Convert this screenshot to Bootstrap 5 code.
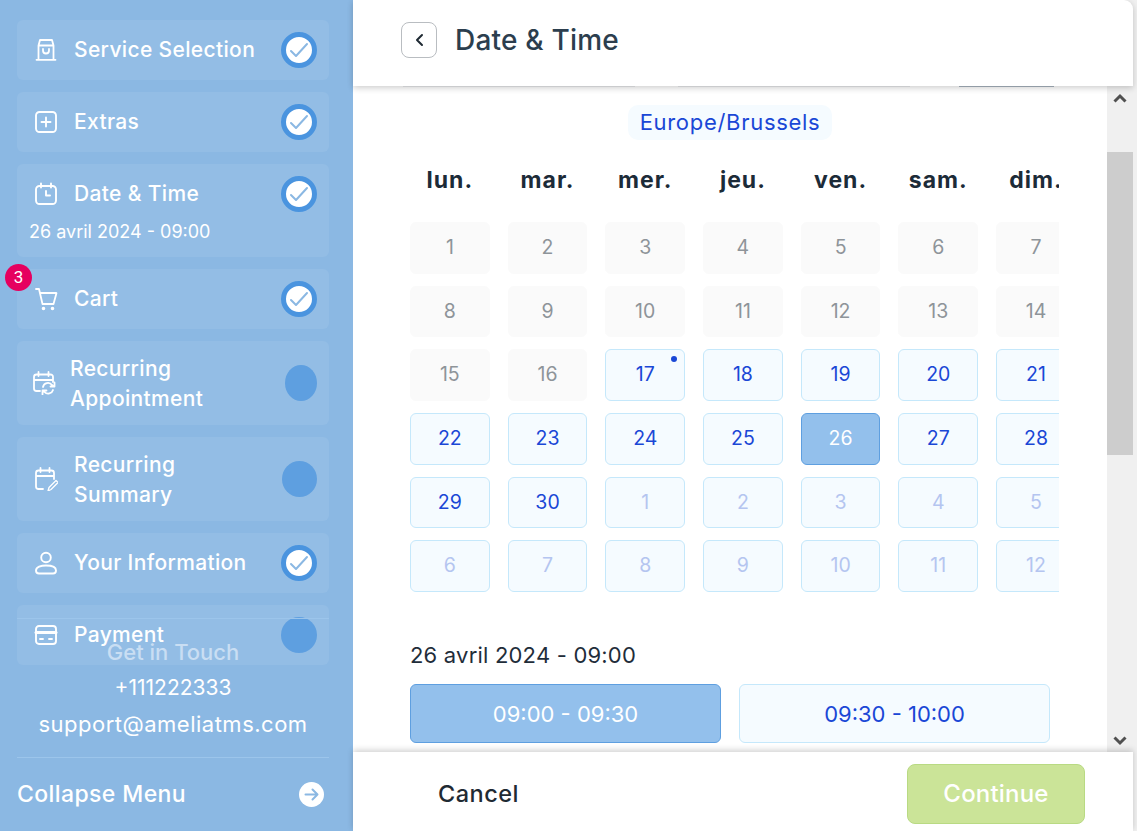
<!DOCTYPE html>
<html lang="fr">
<head>
<meta charset="utf-8">
<title>Date &amp; Time</title>
<link href="https://cdn.jsdelivr.net/npm/bootstrap@5.3.0/dist/css/bootstrap.min.css" rel="stylesheet">
<style>
html,body{height:100%;overflow:hidden}
body{font-family:Inter,"Liberation Sans",sans-serif;background:#fff}
.shell{width:1137px;height:831px}
.side{width:353px;height:831px;background:#8bb8e3;padding:20px 24px 0 17px;color:#fff;flex:none}
.step{background:#93bde5;border-radius:6px;width:312px;min-height:60px;padding:0 12px 0 17px;font-weight:500;font-size:21px;letter-spacing:.35px}
.step-top{min-height:60px}
.step-tall{height:84px}
.step-tall .step-txt{padding-top:2px}
.step-date{height:93px}
.step-sub{font-size:18px;font-weight:400;margin:-5px 0 0 -5px;line-height:26px;letter-spacing:0}
.step-ico{width:24px;height:24px;flex:none;margin-right:16px}
.ico-shift{margin-left:-2px;margin-right:14px}
.step-txt{line-height:30px;flex:1}
.tick{width:36px;height:36px;border-radius:50%;background:#fff;border:5px solid #4a94df;flex:none}
.blob{width:36px;height:36px;border-radius:50%;background:#5e9fe0;flex:none}
.blob-narrow{width:32px}
.blob-mid{width:35px}
.cnt{left:5px;top:264px;width:27px;height:27px;background:#e6005f;font:400 17px/27px Roboto,sans-serif}
.contact{left:17px;top:618px;width:312px;border-top:1px solid #9cc5eb;height:140px;border-bottom:1px solid #9cc5eb;font-size:21px}
.c-title{color:#c9def3;font-weight:500;margin-top:19px;line-height:28px;font-size:22px}
.c-line{line-height:36px}
.c-phone{margin-top:4px}
.c-mail{font-size:22px;letter-spacing:.5px}
.collapse-row{left:17px;top:780px;width:307px;font-weight:500;font-size:23px;letter-spacing:.4px;line-height:28px}
.arrow-dot{width:25px;height:25px;background:#fff;border-radius:50%}
.main{width:784px;height:831px;min-width:0;background:#f0f0f0}
.head{height:86px;width:780px;padding:0 0 6px 48px;box-shadow:0 2px 6px rgba(0,0,0,.2);z-index:2;background:#fff;flex:none;border-top-right-radius:9px}
.back{width:36px;height:36px;border:1px solid #b9bdc1;border-radius:8px;background:#fff;padding:0;margin-right:18px}
.title{font-size:28px;font-weight:500;color:#2c3e4e;margin:0;line-height:36px;letter-spacing:.2px}
.mid{height:666px;min-height:0;flex:none}
.body-pane{width:754px;flex:none;overflow:hidden;padding:0 0 0 57px;background:#fff}
.ghost{height:1px;gap:43px;margin-left:-7px;flex:none}
.ghost i{display:block;height:1px;background:#e9ebed}
.ghost .g1,.ghost .g2{width:232px}
.ghost .g3{width:95px;background:#a9b4c0;margin-left:6px}
.tz-wrap{margin-top:18px;width:640px}
.tz{background:#f5fbff;color:#1a47d6;border-radius:10px;height:35px;line-height:35px;width:204px;text-align:center;font-size:22px;letter-spacing:.7px}
.cal{width:649px;overflow:hidden}
.cal-grid{display:grid;grid-template-columns:repeat(7,79.7px);column-gap:18px;row-gap:12px;width:668px}
.wk{font-weight:700;font-size:23px;letter-spacing:1px;color:#1c2b38;text-align:center;height:82px;line-height:80px;margin-bottom:-12px}
.d{height:51.7px;border-radius:6px;border:1px solid #c5e8fb;background:#f5fbff;color:#1a47d6;text-align:center;font-size:19.5px;line-height:49px}
.d-off{background:#fafafa;border-color:#fafafa;color:#8e9499}
.d-next{color:#b4c5f0}
.d-sel{background:#93c0ec;border-color:#5e9fe0;color:#fff}
.d-dot{top:6px;right:7px;width:6px;height:6px;background:#1a47d6;border-radius:50%}
.when{font-size:22px;letter-spacing:.2px;color:#1f2d3a;margin-top:48px;line-height:30px;font-weight:400}
.slots{gap:18px;margin-top:14px;width:640px}
.slot{width:311px;height:59px;border-radius:6px;border:1px solid #c5e8fb;background:#f5fbff;color:#1a47d6;font-size:22px;line-height:58px;text-align:center}
.slot-sel{background:#93c0ec;border-color:#5e9fe0;color:#fff}
.sbar{width:26px;background:#f0f0f0;flex:none}
.sb-btn{height:23px;flex:none}
.sb-down{height:22px}
.sb-track{flex:1}
.sb-thumb{height:303px;margin-top:43px;background:#cdcdcd}
.foot{height:79px;width:780px;background:#fff;box-shadow:0 -2px 6px rgba(0,0,0,.18);z-index:2;padding:4px 48px 0 85px;flex:none}
.cancel{font-size:23.5px;letter-spacing:.5px;font-weight:500;color:#1f2a33}
.cont{width:178px;height:60px;background:#cbe498;border:1px solid #b9da83;border-radius:8px;color:#fff;font-size:24px;letter-spacing:.2px;font-weight:500;padding:0}
.cont:disabled{background:#cbe498;border-color:#b9da83;color:#fff;opacity:1}
</style>
</head>
<body>
<div class="shell d-flex position-relative">
  <aside class="side d-flex flex-column gap-0 position-relative">
    <div class="d-flex flex-column" style="gap:12px">
      <div class="step d-flex align-items-center">
        <svg class="step-ico" viewBox="0 0 24 24" fill="none" stroke="#fff" stroke-width="1.8" stroke-linejoin="round" stroke-linecap="round"><path d="M4.500 7.500L6 2h12l1.500 5.500M4.500 7.500h15M4.500 7.500V21M19.500 7.500V21M2.500 21.800h19"/><path d="M9 11v1.500a3 3 0 0 0 6 0V11"/></svg>
        <span class="step-txt">Service Selection</span><span class="tick d-flex align-items-center justify-content-center"><svg width="20" height="16" viewBox="0 0 20 16" fill="none" stroke="#8bb8e3" stroke-width="2" stroke-linecap="round" stroke-linejoin="round"><path d="M2 9l5 5L18 2"/></svg></span>
      </div>
      <div class="step d-flex align-items-center">
        <svg class="step-ico" viewBox="0 0 24 24" fill="none" stroke="#fff" stroke-width="1.9" stroke-linecap="round"><rect x="2" y="2" width="20" height="20" rx="3.500"/><path d="M12 7.500v9M7.500 12h9"/></svg>
        <span class="step-txt">Extras</span><span class="tick d-flex align-items-center justify-content-center"><svg width="20" height="16" viewBox="0 0 20 16" fill="none" stroke="#8bb8e3" stroke-width="2" stroke-linecap="round" stroke-linejoin="round"><path d="M2 9l5 5L18 2"/></svg></span>
      </div>
      <div class="step step-date d-flex flex-column">
        <div class="step-top d-flex align-items-center">
          <svg class="step-ico" viewBox="0 0 24 24" fill="none" stroke="#fff" stroke-width="1.9" stroke-linecap="round" stroke-linejoin="round"><rect x="2" y="4" width="20" height="18" rx="3.500"/><path d="M7 1.500v4M17 1.500v4M12 9v4.500h4"/></svg>
          <span class="step-txt">Date &amp; Time</span><span class="tick d-flex align-items-center justify-content-center"><svg width="20" height="16" viewBox="0 0 20 16" fill="none" stroke="#8bb8e3" stroke-width="2" stroke-linecap="round" stroke-linejoin="round"><path d="M2 9l5 5L18 2"/></svg></span>
        </div>
        <div class="step-sub">26 avril 2024 - 09:00</div>
      </div>
      <div class="step d-flex align-items-center">
        <svg class="step-ico" viewBox="0 0 24 24" fill="none" stroke="#fff" stroke-width="1.8" stroke-linecap="round" stroke-linejoin="round"><path d="M2 2h3l3.500 15h11L22.500 6H6"/><circle cx="9.500" cy="21.500" r=".9"/><circle cx="18.500" cy="21.500" r=".9"/></svg>
        <span class="step-txt">Cart</span><span class="tick d-flex align-items-center justify-content-center"><svg width="20" height="16" viewBox="0 0 20 16" fill="none" stroke="#8bb8e3" stroke-width="2" stroke-linecap="round" stroke-linejoin="round"><path d="M2 9l5 5L18 2"/></svg></span>
      </div>
      <div class="step step-tall d-flex align-items-center">
        <svg class="step-ico ico-shift" viewBox="0 0 24 24" fill="none" stroke="#fff" stroke-width="1.8" stroke-linecap="round" stroke-linejoin="round"><path d="M8 20H4.500A2.500 2.500 0 0 1 2 17.500V6a2.500 2.500 0 0 1 2.500-2.500h14A2.500 2.500 0 0 1 21 6v5M6.500 1v4M16.500 1v4M2.500 9h18"/><path d="M11 16a5 5 0 0 1 9-2l1.500 1.500M22.500 11.500v4h-4M21 19a5 5 0 0 1-8.500 2L11 19.500M10.500 23.500v-4h4"/></svg>
        <span class="step-txt">Recurring<br>Appointment</span><span class="blob blob-narrow"></span>
      </div>
      <div class="step step-tall d-flex align-items-center">
        <svg class="step-ico" viewBox="0 0 24 24" fill="none" stroke="#fff" stroke-width="1.8" stroke-linecap="round" stroke-linejoin="round"><path d="M9 22H4.500A2.500 2.500 0 0 1 2 19.500V6a2.500 2.500 0 0 1 2.500-2.500h13A2.500 2.500 0 0 1 20 6v6M6.500 1v4M15.500 1v4M2.500 9h17"/><path d="M14 24l1-3.500 7-7 2 2-7 7z" stroke-width="1.3"/></svg>
        <span class="step-txt">Recurring<br>Summary</span><span class="blob blob-mid"></span>
      </div>
      <div class="step d-flex align-items-center">
        <svg class="step-ico" viewBox="0 0 24 24" fill="none" stroke="#fff" stroke-width="1.9" stroke-linecap="round" stroke-linejoin="round"><circle cx="12" cy="6.500" r="4.800"/><path d="M5 22.500h14a3 3 0 0 0 3-3c0-3.500-5-5-10-5s-10 1.500-10 5a3 3 0 0 0 3 3z"/></svg>
        <span class="step-txt">Your Information</span><span class="tick d-flex align-items-center justify-content-center"><svg width="20" height="16" viewBox="0 0 20 16" fill="none" stroke="#8bb8e3" stroke-width="2" stroke-linecap="round" stroke-linejoin="round"><path d="M2 9l5 5L18 2"/></svg></span>
      </div>
      <div class="step d-flex align-items-center">
        <svg class="step-ico" viewBox="0 0 24 24" fill="none" stroke="#fff" stroke-width="1.9" stroke-linecap="round" stroke-linejoin="round"><rect x="2" y="3" width="20" height="18" rx="3"/><path d="M2 9.500h20" stroke-width="3"/><path d="M6 16h3M15 16h3"/></svg>
        <span class="step-txt">Payment</span><span class="blob"></span>
      </div>
    </div>
    <div class="cnt position-absolute rounded-circle text-center text-white">3</div>
    <div class="contact position-absolute text-center">
      <div class="c-title">Get in Touch</div>
      <div class="c-line c-phone">+111222333</div>
      <div class="c-line c-mail">support@ameliatms.com</div>
    </div>
    <div class="collapse-row position-absolute d-flex align-items-center justify-content-between">
      <span>Collapse Menu</span>
      <span class="arrow-dot d-flex align-items-center justify-content-center"><svg width="15" height="13" viewBox="0 0 15 13" fill="none" stroke="#8bb8e3" stroke-width="2" stroke-linecap="round" stroke-linejoin="round"><path d="M1.500 6.500h12M8.500 1.500l5 5-5 5"/></svg></span>
    </div>
  </aside>
  <main class="main d-flex flex-column">
    <header class="head d-flex align-items-center position-relative">
      <button class="back d-flex align-items-center justify-content-center" type="button" aria-label="Back"><svg width="9" height="14" viewBox="0 0 9 14" fill="none" stroke="#1f2a33" stroke-width="2" stroke-linecap="round" stroke-linejoin="round"><path d="M7 2L2 7l5 5"/></svg></button>
      <h1 class="title">Date &amp; Time</h1>
    </header>
    <div class="mid d-flex">
      <div class="body-pane d-flex flex-column">
        <div class="ghost d-flex"><i class="g1"></i><i class="g2"></i><i class="g3"></i></div>
        <div class="tz-wrap d-flex justify-content-center"><div class="tz">Europe/Brussels</div></div>
        <div class="cal">
          <div class="cal-grid" id="grid">
            <div class="wk">lun.</div><div class="wk">mar.</div><div class="wk">mer.</div><div class="wk">jeu.</div><div class="wk">ven.</div><div class="wk">sam.</div><div class="wk">dim.</div>
            <div class="d d-off">1</div><div class="d d-off">2</div><div class="d d-off">3</div><div class="d d-off">4</div><div class="d d-off">5</div><div class="d d-off">6</div><div class="d d-off">7</div>
            <div class="d d-off">8</div><div class="d d-off">9</div><div class="d d-off">10</div><div class="d d-off">11</div><div class="d d-off">12</div><div class="d d-off">13</div><div class="d d-off">14</div>
            <div class="d d-off">15</div><div class="d d-off">16</div><div class="d position-relative">17<span class="d-dot position-absolute"></span></div><div class="d">18</div><div class="d">19</div><div class="d">20</div><div class="d">21</div>
            <div class="d">22</div><div class="d">23</div><div class="d">24</div><div class="d">25</div><div class="d d-sel">26</div><div class="d">27</div><div class="d">28</div>
            <div class="d">29</div><div class="d">30</div><div class="d d-next">1</div><div class="d d-next">2</div><div class="d d-next">3</div><div class="d d-next">4</div><div class="d d-next">5</div>
            <div class="d d-next">6</div><div class="d d-next">7</div><div class="d d-next">8</div><div class="d d-next">9</div><div class="d d-next">10</div><div class="d d-next">11</div><div class="d d-next">12</div>
          </div>
        </div>
        <div class="when">26 avril 2024 - 09:00</div>
        <div class="slots d-flex">
          <div class="slot slot-sel">09:00 - 09:30</div>
          <div class="slot">09:30 - 10:00</div>
        </div>
      </div>
      <div class="sbar d-flex flex-column">
        <div class="sb-btn d-flex align-items-center justify-content-center"><svg width="14" height="10" viewBox="0 0 14 10" fill="none" stroke="#505050" stroke-width="3"><path d="M1.500 8.500L7 3l5.500 5.500"/></svg></div>
        <div class="sb-track"><div class="sb-thumb"></div></div>
        <div class="sb-btn sb-down d-flex align-items-center justify-content-center"><svg width="14" height="10" viewBox="0 0 14 10" fill="none" stroke="#505050" stroke-width="3"><path d="M1.500 1.500L7 7l5.500-5.500"/></svg></div>
      </div>
    </div>
    <footer class="foot d-flex align-items-center justify-content-between position-relative">
      <span class="cancel">Cancel</span>
      <button class="cont btn" type="button" disabled>Continue</button>
    </footer>
  </main>
</div>
</body>
</html>
